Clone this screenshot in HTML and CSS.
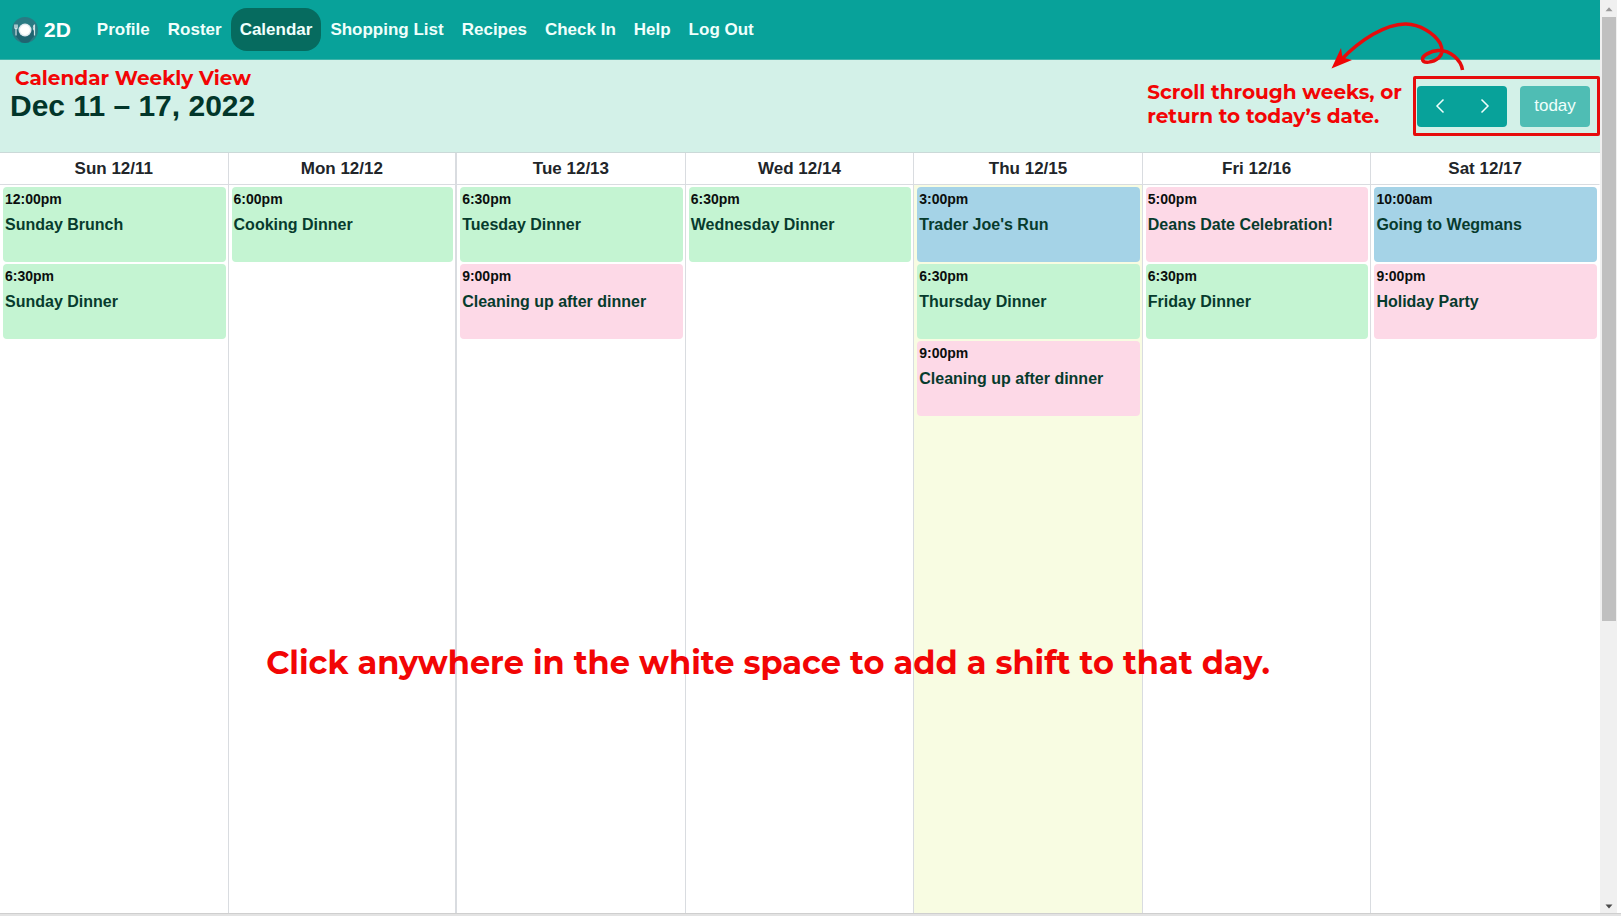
FILE: index.html
```html
<!DOCTYPE html>
<html lang="en">
<head>
<meta charset="utf-8">
<title>2D Calendar</title>
<link rel="stylesheet" href="styles.css">
</head>
<body>
<div class="window">
  <div class="page">
    <nav class="navbar">
      <a class="brand" href="#">
        <svg class="brand-logo" viewBox="0 0 26 26" aria-hidden="true">
          <circle cx="13" cy="13" r="13" fill="#2a7a83"/>
          <path d="M3 13h20v5l-6 7.3a13 13 0 0 1-8 0L3 18z" fill="#1f6470"/>
          <circle cx="13" cy="13" r="6.5" fill="#dfe9ee"/>
          <circle cx="13" cy="13" r="5" fill="#fff"/>
          <path d="M4 7.500v11M22.500 7.500v11" stroke="#d5e3e6" stroke-width="1.200"/>
          <path d="M2.800 7.500v4h2.400v-4M22 8q-1.500 3 0 5.500" fill="none" stroke="#d5e3e6"/>
        </svg>
        <span>2D</span>
      </a>
      <ul class="nav-list">
        <li><a class="nav-link" href="#">Profile</a></li>
        <li><a class="nav-link" href="#">Roster</a></li>
        <li><a class="nav-link active" href="#" aria-current="page">Calendar</a></li>
        <li><a class="nav-link" href="#">Shopping List</a></li>
        <li><a class="nav-link" href="#">Recipes</a></li>
        <li><a class="nav-link" href="#">Check In</a></li>
        <li><a class="nav-link" href="#">Help</a></li>
        <li><a class="nav-link" href="#">Log Out</a></li>
      </ul>
    </nav>

    <header class="toolbar">
      <p class="note note-view">Calendar Weekly View</p>
      <h1 class="title">Dec 11 – 17, 2022</h1>
      <p class="note note-scroll">Scroll through weeks, or<br>return to today’s date.</p>
      <div class="controls">
        <div class="button-group">
          <button class="button" type="button" aria-label="Previous week"><svg class="chevron" viewBox="0 0 16 16"><path d="M11.500 1.500 5 8l6.500 6.500"/></svg></button>
          <button class="button" type="button" aria-label="Next week"><svg class="chevron" viewBox="0 0 16 16"><path d="M4.500 1.500 11 8l-6.500 6.500"/></svg></button>
        </div>
        <button class="button today-button" type="button">today</button>
      </div>
      <svg class="arrow" viewBox="0 0 150 80" aria-hidden="true">
        <path d="M141.500 70C140 60 129 49.500 117 50.500C109 51 101 56 101.500 59.500C102 63.500 112 63 117.500 58C122 54 122 49 119 43C113 33 99 24.500 85 24C65 23.500 39 40 20 60" fill="none" stroke="#e60c0c" stroke-width="3.500"/>
        <path d="M10.500 68.500 20 48l1.500 9.500L31 60z" fill="#f00505"/>
      </svg>
    </header>

    <main class="calendar">
      <table class="week">
        <thead>
          <tr><th scope="col">Sun 12/11</th><th scope="col">Mon 12/12</th><th scope="col">Tue 12/13</th><th scope="col">Wed 12/14</th><th scope="col">Thu 12/15</th><th scope="col">Fri 12/16</th><th scope="col">Sat 12/17</th></tr>
        </thead>
        <tbody>
          <tr>
            <td>
              <div class="event dinner"><time>12:00pm</time><span>Sunday Brunch</span></div>
              <div class="event dinner"><time>6:30pm</time><span>Sunday Dinner</span></div>
            </td>
            <td>
              <div class="event dinner"><time>6:00pm</time><span>Cooking Dinner</span></div>
            </td>
            <td>
              <div class="event dinner"><time>6:30pm</time><span>Tuesday Dinner</span></div>
              <div class="event social"><time>9:00pm</time><span>Cleaning up after dinner</span></div>
            </td>
            <td>
              <div class="event dinner"><time>6:30pm</time><span>Wednesday Dinner</span></div>
            </td>
            <td class="current">
              <div class="event shopping"><time>3:00pm</time><span>Trader Joe's Run</span></div>
              <div class="event dinner"><time>6:30pm</time><span>Thursday Dinner</span></div>
              <div class="event social"><time>9:00pm</time><span>Cleaning up after dinner</span></div>
            </td>
            <td>
              <div class="event social"><time>5:00pm</time><span>Deans Date Celebration!</span></div>
              <div class="event dinner"><time>6:30pm</time><span>Friday Dinner</span></div>
            </td>
            <td>
              <div class="event shopping"><time>10:00am</time><span>Going to Wegmans</span></div>
              <div class="event social"><time>9:00pm</time><span>Holiday Party</span></div>
            </td>
          </tr>
        </tbody>
      </table>
      <p class="note note-add">Click anywhere in the white space to add a shift to that day.</p>
    </main>
  </div>

  <div class="scrollbar" aria-hidden="true">
    <svg class="scroll-arrow" viewBox="0 0 16 16"><path d="M4 11 8 6.500l4 4.500z" fill="#9a9a9a"/></svg>
    <div class="scroll-track"><div class="scroll-thumb"></div></div>
    <svg class="scroll-arrow" viewBox="0 0 16 16"><path d="M4 8h8l-4 4.500z" fill="#4a4a4a"/></svg>
  </div>
</div>
<div class="window-edge"></div>
</body>
</html>
```

FILE: styles.css
```css
* {
  box-sizing: border-box;
}

body {
  display: flex;
  flex-direction: column;
  height: 100vh;
  margin: 0;
  background: #fff;
  color: #212529;
  font-family: "Liberation Sans", Arial, sans-serif;
}

.window {
  display: flex;
  flex: 1;
  min-height: 0;
  padding-right: 4px;
}

.page {
  display: flex;
  flex: 1;
  flex-direction: column;
  min-width: 0;
}

.window-edge {
  height: 3px;
  border-top: 1px solid #cfcfcf;
  background: #e3e3e3;
}

/* Navigation */

.navbar {
  display: flex;
  align-items: center;
  height: 60px;
  padding: 0 12px;
  gap: 17px;
  border-bottom: 1px solid #3fb3a9;
  background: #08a29a;
  font-weight: bold;
}

.brand {
  display: flex;
  align-items: center;
  gap: 6px;
  color: #fff;
  font-size: 21px;
  text-decoration: none;
}

.brand-logo {
  width: 26px;
  height: 26px;
}

.nav-list {
  display: flex;
  margin: 0;
  padding: 0;
  list-style: none;
}

.nav-link {
  display: block;
  padding: 0 9px;
  border-radius: 16px;
  color: #f0fffc;
  font-size: 17px;
  line-height: 43px;
  text-decoration: none;
  white-space: nowrap;
}

.nav-link.active {
  background: #066b5f;
}

/* Toolbar */

.toolbar {
  position: relative;
  display: flex;
  align-items: center;
  justify-content: space-between;
  height: 92px;
  padding: 0 10px;
  background: #d3f1e8;
}

.title {
  margin: 0;
  color: #02362a;
  font-size: 30px;
  line-height: 36px;
}

.controls {
  position: relative;
  display: flex;
  gap: 13px;
}

.controls::after {
  position: absolute;
  inset: -10px -10px -9px -4px;
  border: 3px solid #e60c0c;
  border-radius: 2px;
  content: "";
  pointer-events: none;
}

.button-group {
  display: flex;
  overflow: hidden;
  border-radius: 4px;
}

.button {
  display: flex;
  align-items: center;
  justify-content: center;
  width: 45px;
  height: 41px;
  padding: 0;
  border: 0;
  background: #08a29a;
  color: #effffc;
  font: 17px "Liberation Sans", Arial, sans-serif;
}

.today-button {
  width: 70px;
  border-radius: 4px;
  background: #4fbdb4;
}

.chevron {
  width: 16px;
  height: 16px;
  fill: none;
  stroke: #effffc;
  stroke-width: 1.5;
}

/* Annotations */

.note {
  position: absolute;
  margin: 0;
  color: #f20505;
  font-family: Montserrat, Inter, sans-serif;
  font-size: 20px;
  font-weight: 700;
  line-height: 24px;
  white-space: nowrap;
}

.note-view {
  top: 6px;
  left: 15px;
}

.note-scroll {
  top: 20px;
  right: 198px;
}

.note-add {
  right: 0;
  bottom: 228px;
  left: 0;
  padding-right: 64px;
  font-size: 32px;
  line-height: 44px;
  text-align: center;
  pointer-events: none;
}

.arrow {
  position: absolute;
  top: -60px;
  right: 129px;
  width: 150px;
  height: 80px;
}

/* Week grid */

.calendar {
  position: relative;
  flex: 1;
  min-height: 0;
  border-top: 1px solid #cbd9d8;
}

.week {
  width: 100%;
  height: 100%;
  border-collapse: separate;
  border-spacing: 0;
  table-layout: fixed;
}

.week th,
.week td {
  border-right: 1px solid #d9dce0;
}

.week th:last-child,
.week td:last-child {
  border-right-color: transparent;
}

.week th:nth-child(2),
.week td:nth-child(2) {
  border-right-width: 2px;
}

.week th {
  height: 32px;
  padding: 0;
  border-bottom: 1px solid #d9dce0;
  font-size: 17px;
  line-height: 31px;
}

.week td {
  padding: 2px 2px 2px 3px;
  vertical-align: top;
}

.week .current {
  background: #f8fce2;
}

.event {
  display: flex;
  flex-direction: column;
  height: 75px;
  margin-bottom: 2px;
  padding: 0 2px;
  border-radius: 4px;
  color: #073b2d;
  font-size: 16px;
  font-weight: bold;
  line-height: 25px;
}

.event time {
  color: #0b0f0e;
  font-size: 14px;
}

.dinner {
  background: #c4f4d2;
}

.social {
  background: #fdd9e7;
}

.shopping {
  background: #a5d3e7;
}

/* Window scrollbar */

.scrollbar {
  display: flex;
  flex-direction: column;
  width: 17px;
  padding: 0 1px 0 2px;
  background: #f0f0f0;
}

.scroll-arrow {
  width: 14px;
  height: 17px;
}

.scroll-track {
  flex: 1;
}

.scroll-thumb {
  height: 68.7%;
  background: #c0c0c0;
}
```
